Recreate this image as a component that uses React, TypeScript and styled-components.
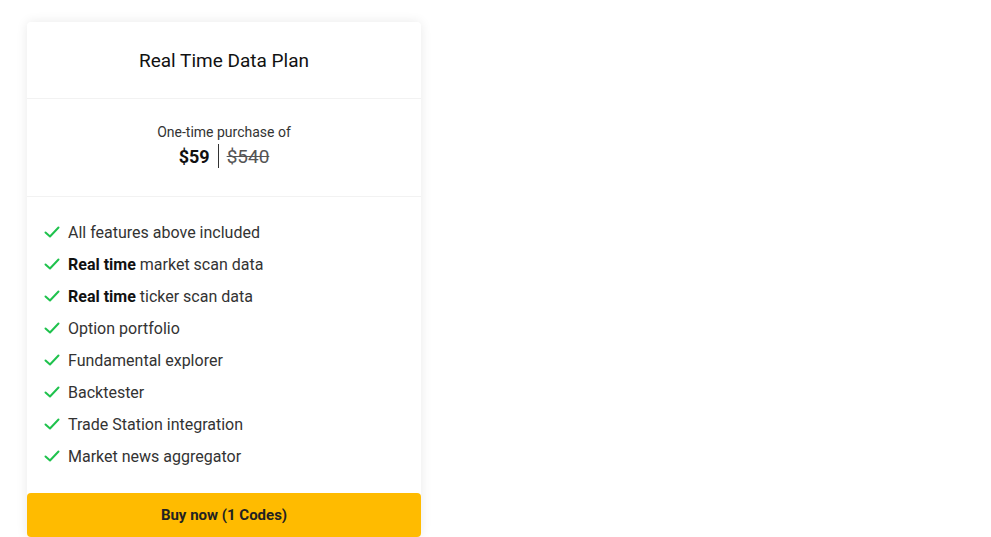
import styled, { createGlobalStyle } from 'styled-components';

const GlobalStyle = createGlobalStyle`
  body {
    margin: 0;
    background: #ffffff;
    font-family: Roboto, 'Liberation Sans', sans-serif;
    color: #212121;
  }
`;

const Page = styled.div`
  padding: 22px 0 0 27px;
`;

const Card = styled.div`
  display: flex;
  flex-direction: column;
  width: 394px;
  background: #ffffff;
  border-radius: 4px;
  box-shadow: 0 0 12px rgba(0, 0, 0, 0.09);
`;

const Header = styled.div`
  display: flex;
  justify-content: center;
  align-items: center;
  height: 76px;
  border-bottom: 1px solid #f2f2f2;
`;

const Title = styled.h2`
  margin: 0;
  font-size: 19px;
  font-weight: 400;
  color: #111111;
`;

const PriceSection = styled.div`
  display: flex;
  flex-direction: column;
  align-items: center;
  padding: 23px 0 27px;
  border-bottom: 1px solid #f2f2f2;
`;

const PriceCaption = styled.div`
  font-size: 14px;
  line-height: 20px;
  color: #333333;
`;

const PriceRow = styled.div`
  display: flex;
  align-items: center;
  gap: 8px;
  height: 26px;
  margin-top: 1px;
  font-size: 18px;
`;

const Price = styled.span`
  font-weight: 700;
  color: #111111;
`;

const Separator = styled.span`
  width: 1px;
  height: 24px;
  background: #333333;
`;

const OldPrice = styled.span`
  font-size: 19px;
  color: #555555;
  text-decoration: line-through;
`;

const FeatureList = styled.ul`
  list-style: none;
  margin: 0;
  padding: 19px 17px 21px;
`;

const Feature = styled.li`
  display: flex;
  align-items: center;
  gap: 8px;
  height: 32px;
  font-size: 16px;
  color: #333333;

  b {
    font-weight: 700;
    color: #111111;
  }
`;

const BuyButton = styled.button`
  height: 44px;
  border: none;
  border-radius: 4px;
  background: #ffbb00;
  font-family: Roboto, 'Liberation Sans', sans-serif;
  font-size: 15px;
  font-weight: 700;
  color: #222222;
  cursor: pointer;
`;

const Check = () => (
  <svg width="16" height="16" viewBox="0 0 16 16" fill="none">
    <path
      d="M1.5 8.5 L6 12.5 L14.5 3.5"
      stroke="#1fc24d"
      strokeWidth="2"
      strokeLinecap="round"
      strokeLinejoin="round"
    />
  </svg>
);

const features: { bold?: string; text: string }[] = [
  { text: 'All features above included' },
  { bold: 'Real time', text: ' market scan data' },
  { bold: 'Real time', text: ' ticker scan data' },
  { text: 'Option portfolio' },
  { text: 'Fundamental explorer' },
  { text: 'Backtester' },
  { text: 'Trade Station integration' },
  { text: 'Market news aggregator' },
];

export default function App(): JSX.Element {
  return (
    <Page>
      <GlobalStyle />
      <Card>
        <Header>
          <Title>Real Time Data Plan</Title>
        </Header>
        <PriceSection>
          <PriceCaption>One-time purchase of</PriceCaption>
          <PriceRow>
            <Price>$59</Price>
            <Separator />
            <OldPrice>$540</OldPrice>
          </PriceRow>
        </PriceSection>
        <FeatureList>
          {features.map((f) => (
            <Feature key={(f.bold ?? '') + f.text}>
              <Check />
              <span>
                {f.bold && <b>{f.bold}</b>}
                {f.text}
              </span>
            </Feature>
          ))}
        </FeatureList>
        <BuyButton>Buy now (1 Codes)</BuyButton>
      </Card>
    </Page>
  );
}
